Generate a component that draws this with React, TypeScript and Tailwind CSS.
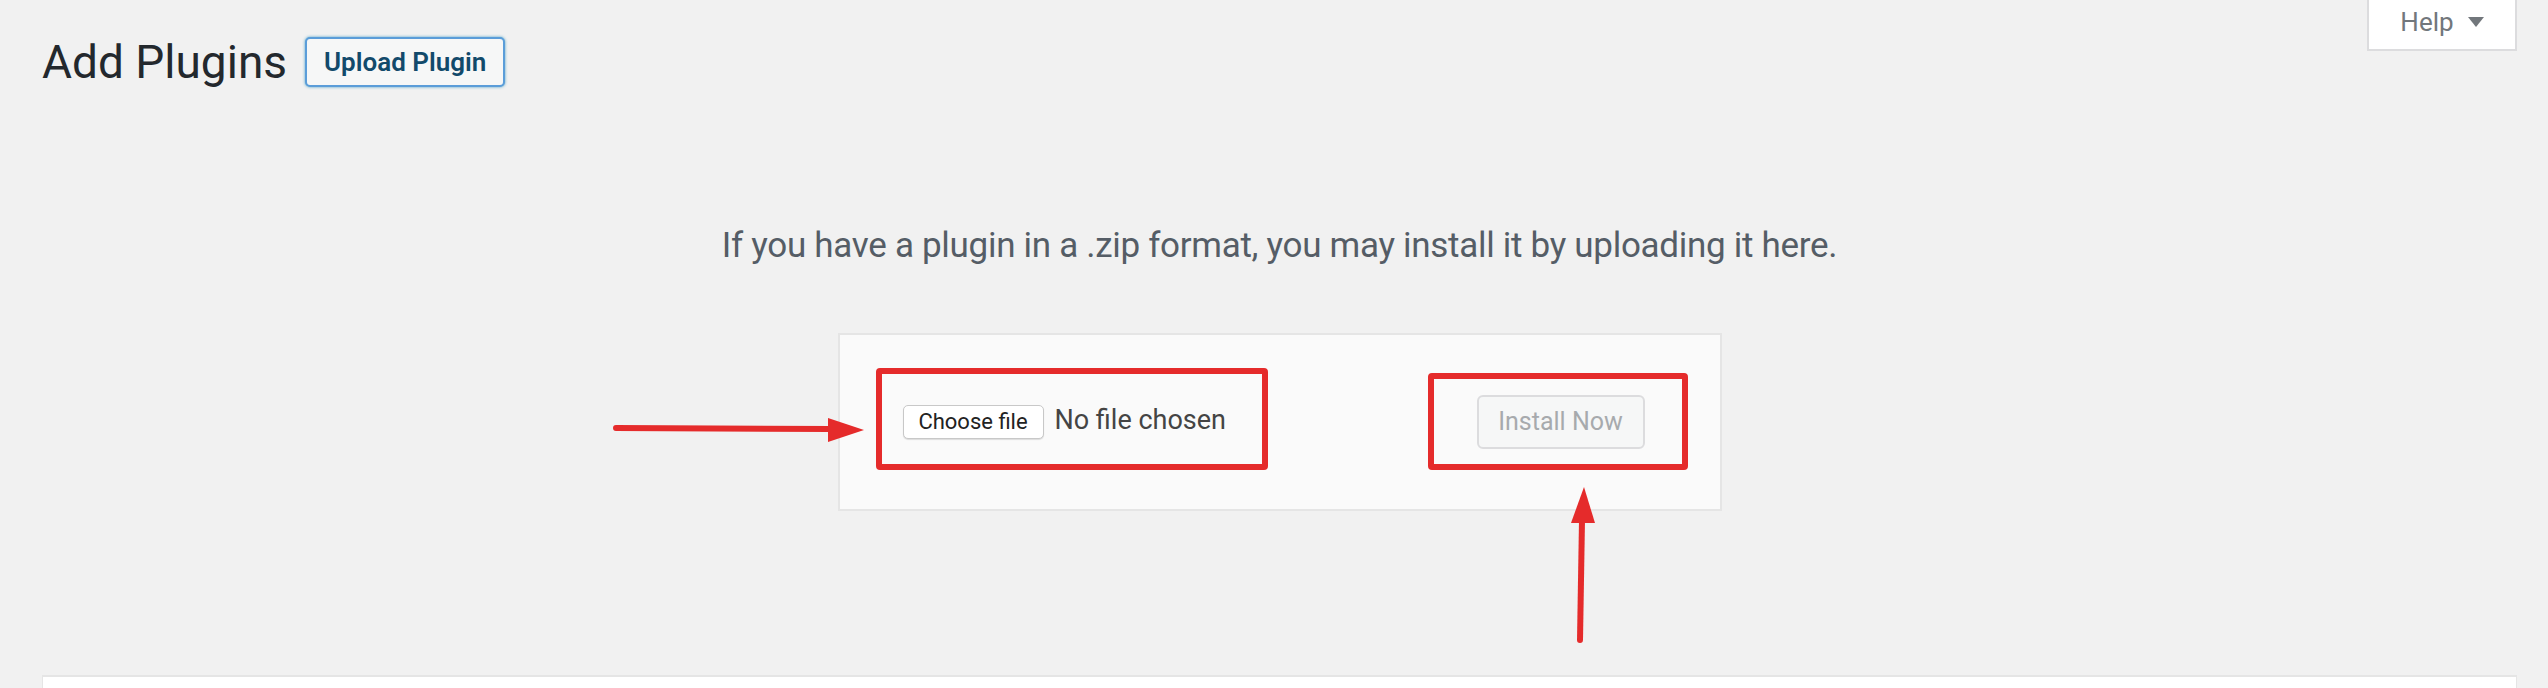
import React from "react";

export default function App() {
  return (
    <div
      className="w-[2548px] h-[688px] overflow-hidden bg-[#f1f1f1] pl-[42px] pr-[31px]"
      style={{ fontFamily: "Roboto, 'Noto Sans', 'Liberation Sans', sans-serif" }}
    >
      {/* top row */}
      <div className="flex items-start justify-between">
        <div className="flex items-center gap-[18px] pt-[37px]">
          <h1 className="text-[46px] leading-[50px] font-normal text-[#23282d]">Add Plugins</h1>
          <button className="h-[50px] px-[17px] flex items-center justify-center rounded-[5px] border-2 border-[#5b9dd9] bg-[#f6f7f7] text-[26px] font-semibold text-[#124a6b] shadow-[0_0_3px_rgba(30,140,190,0.8)]">
            Upload Plugin
          </button>
        </div>
        <div className="w-[150px] h-[51px] bg-white border-2 border-t-0 border-[#dcdcde] flex items-center justify-center gap-[14px] pb-[6px]">
          <span className="text-[26px] leading-[30px] text-[#72777c]">Help</span>
          <svg width="16" height="10" viewBox="0 0 16 10" className="mt-[1px]">
            <polygon points="0,0 16,0 8,10" fill="#72777c" />
          </svg>
        </div>
      </div>

      {/* description */}
      <p className="mt-[134px] text-center text-[35px] tracking-[-0.3px] leading-[50px] text-[#555d66]">
        If you have a plugin in a .zip format, you may install it by uploading it here.
      </p>

      {/* upload form */}
      <div className="relative mx-auto mt-[62px] w-[884px] h-[178px] bg-[#fafafa] border-2 border-[#e5e5e5] flex items-center justify-between pl-[63px] pr-[75px]">
        <div className="flex items-center gap-[11px]">
          <button className="w-[141px] h-[34px] bg-white border border-[#c8c8c8] rounded-[5px] shadow-[0_1px_1px_rgba(0,0,0,0.12)] text-[22px] leading-[26px] text-[#222]">
            Choose file
          </button>
          <span className="text-[27px] leading-[32px] text-[#444] -mt-[5px]">No file chosen</span>
        </div>
        <button className="w-[168px] h-[54px] bg-[#f6f7f7] border-2 border-[#dcdcde] rounded-[6px] text-[25px] leading-[30px] text-[#a7aaad]">
          Install Now
        </button>

        {/* annotations */}
        <div className="absolute left-[36px] top-[33px] w-[392px] h-[102px] border-[6px] border-[#e52b2b] rounded-[4px] pointer-events-none" />
        <div className="absolute left-[588px] top-[38px] w-[260px] h-[97px] border-[6px] border-[#e52b2b] rounded-[4px] pointer-events-none" />
        <svg
          className="absolute left-[-227px] top-[80px] pointer-events-none"
          width="254"
          height="30"
          viewBox="0 0 254 30"
        >
          <line x1="3" y1="13" x2="218" y2="14" stroke="#e52b2b" strokeWidth="6" strokeLinecap="round" />
          <polygon points="215,3 215,27 251,15" fill="#e52b2b" />
        </svg>
        <svg
          className="absolute left-[728px] top-[149px] pointer-events-none"
          width="30"
          height="162"
          viewBox="0 0 30 162"
        >
          <line x1="14" y1="36" x2="12" y2="156" stroke="#e52b2b" strokeWidth="6" strokeLinecap="round" />
          <polygon points="3,39 27,39 16,3" fill="#e52b2b" />
        </svg>
      </div>

      {/* bottom panel */}
      <div className="mt-[164px] h-[120px] bg-white border-t-2 border-x border-[#e5e5e5]" />
    </div>
  );
}
